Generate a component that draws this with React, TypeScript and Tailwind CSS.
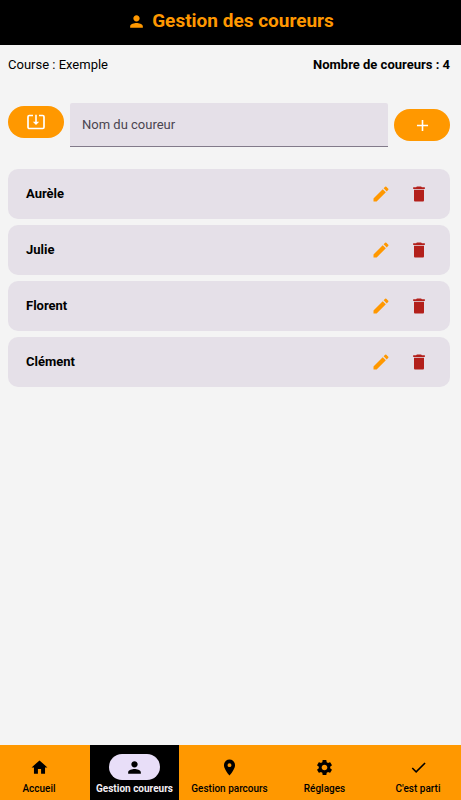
import { useState } from "react";
import type { FormEvent } from "react";
import clsx from "clsx";
import type { IconType } from "react-icons";
import {
  MdAdd,
  MdCheck,
  MdEdit,
  MdHome,
  MdLocationOn,
  MdPerson,
  MdSettings,
} from "react-icons/md";

type NavItem = {
  label: string;
  icon: IconType;
};

const NAV_ITEMS: NavItem[] = [
  { label: "Accueil", icon: MdHome },
  { label: "Gestion coureurs", icon: MdPerson },
  { label: "Gestion parcours", icon: MdLocationOn },
  { label: "Réglages", icon: MdSettings },
  { label: "C'est parti", icon: MdCheck },
];

export default function App() {
  const [runners, setRunners] = useState(["Aurèle", "Julie", "Florent", "Clément"]);
  const [name, setName] = useState("");
  const [current, setCurrent] = useState("Gestion coureurs");

  function addRunner(event: FormEvent) {
    event.preventDefault();
    const trimmed = name.trim();
    if (!trimmed) {
      return;
    }
    setRunners([...runners, trimmed]);
    setName("");
  }

  function removeRunner(index: number) {
    setRunners(runners.filter((_, i) => i !== index));
  }

  return (
    <div className="flex min-h-screen flex-col bg-[#f4f4f4] font-[Roboto,sans-serif] text-black">
      <header className="flex items-center justify-center gap-1.5 bg-black pt-[7px] pb-2.5 text-[#ff9800]">
        <MdPerson size={19} aria-hidden="true" />
        <h1 className="text-[19px] leading-7 font-bold">Gestion des coureurs</h1>
      </header>

      <main className="flex flex-1 flex-col pr-[11px] pl-2">
        <div className="flex items-center justify-between pt-2.5 text-[13px] leading-5">
          <p>Course : Exemple</p>
          <p className="font-bold">Nombre de coureurs : {runners.length}</p>
        </div>

        <form onSubmit={addRunner} className="mt-7 flex items-center gap-1.5">
          <button
            type="button"
            aria-label="Importer des coureurs"
            className="mb-1.5 flex h-8 w-14 shrink-0 items-center justify-center rounded-full bg-[#ff9800] text-white"
          >
            <ImportIcon />
          </button>
          <input
            type="text"
            aria-label="Nom du coureur"
            placeholder="Nom du coureur"
            value={name}
            onChange={(event) => setName(event.target.value)}
            className="h-11 min-w-0 flex-1 rounded-t-xs border-b border-[#827a8a] bg-[#e5e0e8] px-3 text-[13px] outline-none placeholder:text-[#4a4550]"
          />
          <button
            type="submit"
            aria-label="Ajouter"
            className="flex h-8 w-14 shrink-0 items-center justify-center rounded-full bg-[#ff9800] text-white"
          >
            <MdAdd size={19} />
          </button>
        </form>

        <ul className="mt-[22px] flex flex-col gap-1.5">
          {runners.map((runner, index) => (
            <li
              key={index}
              className="flex h-[50px] items-center rounded-[10px] bg-[#e5e0e8] pr-[21px] pl-[18px]"
            >
              <span className="flex-1 text-[13px] font-bold">{runner}</span>
              <button type="button" aria-label={`Modifier ${runner}`} className="text-[#ff9800]">
                <MdEdit size={20} />
              </button>
              <button
                type="button"
                aria-label={`Supprimer ${runner}`}
                className="ml-[18px] text-[#b3201b]"
                onClick={() => removeRunner(index)}
              >
                <TrashIcon />
              </button>
            </li>
          ))}
        </ul>
      </main>

      <nav className="sticky bottom-0 grid grid-cols-[84fr_89fr_89fr_89fr_86fr] gap-1.5 bg-[#ff9800]">
        {NAV_ITEMS.map(({ label, icon: Icon }) => {
          const active = label === current;
          return (
            <button
              key={label}
              type="button"
              aria-current={active ? "page" : undefined}
              onClick={() => setCurrent(label)}
              className={clsx(
                "flex h-[55px] flex-col items-center pt-[9px] whitespace-nowrap first:pr-1.5",
                active ? "bg-black font-bold" : "font-medium",
              )}
            >
              <span
                className={clsx(
                  "flex h-[26px] w-[51px] items-center justify-center rounded-full",
                  active && "bg-[#e8def8]",
                )}
              >
                <Icon size={19} aria-hidden="true" />
              </span>
              <span className={clsx("text-[10px] leading-[18px]", active && "text-[#f4eff4]")}>
                {label}
              </span>
            </button>
          );
        })}
      </nav>
    </div>
  );
}

function ImportIcon() {
  return (
    <svg width="20" height="20" viewBox="0 0 20 20" fill="none" aria-hidden="true">
      <path
        d="M7 3.500H3.300A1.300 1.300 0 0 0 2 4.800v10.400a1.300 1.300 0 0 0 1.300 1.300h13.400a1.300 1.300 0 0 0 1.300-1.300V4.800a1.300 1.300 0 0 0-1.300-1.300H13"
        stroke="currentColor"
        strokeWidth="1.700"
      />
      <path d="M9.200 2.700h1.600v7H13.200L10 13 6.800 9.700h2.400z" fill="currentColor" />
    </svg>
  );
}

function TrashIcon() {
  return (
    <svg width="20" height="20" viewBox="0 0 24 24" fill="currentColor" aria-hidden="true">
      <path d="M6 19.500c0 .9.600 1.500 1.500 1.500h9c.9 0 1.500-.6 1.500-1.500V7H6zM19 4h-3.500l-1-1h-5l-1 1H5v2h14z" />
    </svg>
  );
}
